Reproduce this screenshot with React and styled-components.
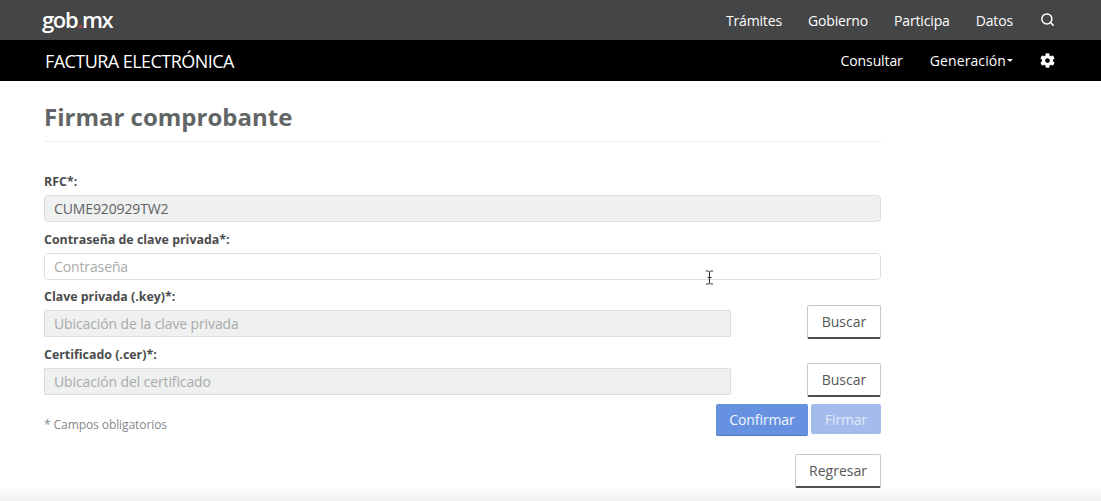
import React from "react"
import styled, { createGlobalStyle } from "styled-components"
import { FaCog } from "react-icons/fa"
import { Search } from "lucide-react"

const GlobalStyle = createGlobalStyle`
  html, body {
    margin: 0;
    padding: 0;
    background: #fff;
    font-family: "Open Sans", "Liberation Sans", sans-serif;
    overflow: hidden;
  }
`

export default function App() {
  return (
    <Page>
      <GlobalStyle />
      <TopBar>
        <Logo>
          gob<LogoDot>.</LogoDot>mx
        </Logo>
        <TopLinks>
          <TopLink>Trámites</TopLink>
          <TopLink>Gobierno</TopLink>
          <TopLink>Participa</TopLink>
          <TopLink>Datos</TopLink>
          <SearchIcon>
            <Search size={15} strokeWidth={2.4} color="#fff" />
          </SearchIcon>
        </TopLinks>
      </TopBar>
      <SubBar>
        <Brand>FACTURA ELECTRÓNICA</Brand>
        <SubLinks>
          <SubLink>Consultar</SubLink>
          <SubLink $spacing={0.1}>
            Generación
            <Caret />
          </SubLink>
          <FaCog color="white" size="15px" />
        </SubLinks>
      </SubBar>
      <Main>
        <Title>Firmar comprobante</Title>
        <Label $top={30}>RFC*:</Label>
        <Input $filled>CUME920929TW2</Input>
        <Label>Contraseña de clave privada*:</Label>
        <Input $placeholder>Contraseña</Input>
        <FileRow>
          <FileField>
            <Label $top={7}>Clave privada (.key)*:</Label>
            <Input $disabled>Ubicación de la clave privada</Input>
          </FileField>
          <OutlineButton>Buscar</OutlineButton>
        </FileRow>
        <FileRow>
          <FileField>
            <Label>Certificado (.cer)*:</Label>
            <Input $disabled>Ubicación del certificado</Input>
          </FileField>
          <OutlineButton>Buscar</OutlineButton>
        </FileRow>
        <ActionRow>
          <Note>* Campos obligatorios</Note>
          <Actions>
            <PrimaryButton>Confirmar</PrimaryButton>
            <PrimaryButton $off>Firmar</PrimaryButton>
          </Actions>
        </ActionRow>
        <BackRow>
          <OutlineButton $wide>Regresar</OutlineButton>
        </BackRow>
      </Main>
      <Cursor width="9" height="15" viewBox="0 0 9 15">
        <path d="M1 1h2.5L4.5 2 5.5 1H8M4.5 2v11M1 14h2.500L4.500 13l1 1H8M2.500 7.500h4" fill="none" stroke="#333" strokeWidth="1" />
      </Cursor>
      <BottomFade />
    </Page>
  )
}

const Page = styled.div`
  position: relative;
  width: 1101px;
  height: 501px;
  overflow: hidden;
  background: #fff;
`
const TopBar = styled.div`
  height: 40px;
  background: #444546;
  display: flex;
  align-items: center;
  justify-content: space-between;
  padding: 0 46px 0 42px;
`
const Logo = styled.div`
  color: #fff;
  font-size: 22px;
  font-weight: 600;
  letter-spacing: -1.35px;
  margin-top: -2px;
`
const LogoDot = styled.span`
  color: #b0474a;
`
const TopLinks = styled.div`
  display: flex;
  align-items: center;
  gap: 26px;
`
const TopLink = styled.span`
  color: #fff;
  font-size: 14px;
  letter-spacing: -0.15px;
`
const SearchIcon = styled.span`
  display: flex;
  margin: -1px 0 0 1px;
`
const SubBar = styled.div`
  height: 41px;
  background: #000;
  display: flex;
  align-items: center;
  justify-content: space-between;
  padding: 0 46px 0 45px;
`
const Brand = styled.div`
  color: #fff;
  font-size: 18px;
  letter-spacing: -0.55px;
`
const SubLinks = styled.div`
  display: flex;
  align-items: center;
  gap: 27px;
`
const SubLink = styled.span`
  color: #fff;
  font-size: 14px;
  letter-spacing: ${(p) => p.$spacing ?? -0.1}px;
  display: flex;
  align-items: center;
`
const Caret = styled.span`
  width: 0;
  height: 0;
  margin-left: 1px;
  border-top: 3px solid #fff;
  border-left: 3px solid transparent;
  border-right: 3px solid transparent;
`
const Main = styled.div`
  width: 837px;
  margin-left: 44px;
`
const Title = styled.h1`
  margin: 0;
  height: 61px;
  padding-top: 18px;
  box-sizing: border-box;
  border-bottom: 1px solid #eeeeee;
  color: #626566;
  font-size: 24px;
  line-height: 36px;
  font-weight: 700;
`
const Label = styled.div`
  margin-top: ${(p) => p.$top || 8}px;
  margin-bottom: 6px;
  height: 17px;
  color: #4a4c4d;
  font-size: 12.4px;
  line-height: 20px;
  font-weight: 700;
`
const Input = styled.div`
  box-sizing: border-box;
  height: 27px;
  padding: 0 9px;
  border: 1px solid #dcdedd;
  border-radius: ${(p) => (p.$disabled ? "1px" : "4px")};
  background: ${(p) => (p.$filled || p.$disabled ? "#eff0f0" : "#fff")};
  color: ${(p) => (p.$filled ? "#606263" : "#a9abab")};
  font-size: 14px;
  line-height: 25px;
  letter-spacing: -0.12px;
`
const FileRow = styled.div`
  display: flex;
  justify-content: space-between;
  align-items: flex-end;
`
const FileField = styled.div`
  width: 687px;
`
const OutlineButton = styled.button`
  box-sizing: border-box;
  width: ${(p) => (p.$wide ? "86px" : "74px")};
  height: 34px;
  margin-bottom: -2px;
  padding: 0;
  background: #fff;
  border: 1px solid #c9c9c9;
  border-bottom: 2px solid #4c4c4c;
  border-radius: 2px;
  color: #555758;
  font-family: inherit;
  font-size: 14px;
`
const ActionRow = styled.div`
  display: flex;
  justify-content: space-between;
  align-items: center;
  margin-top: 9px;
`
const Note = styled.span`
  color: #85878a;
  font-size: 12px;
  letter-spacing: -0.08px;
  margin-top: 8px;
`
const Actions = styled.div`
  display: flex;
  align-items: flex-start;
  gap: 3px;
`
const PrimaryButton = styled.button`
  box-sizing: border-box;
  height: ${(p) => (p.$off ? "30px" : "32px")};
  width: ${(p) => (p.$off ? "70px" : "92px")};
  padding: 0;
  background: ${(p) => (p.$off ? "#a3bcec" : "#6691e0")};
  border: 0;
  border-bottom: ${(p) => (p.$off ? "0" : "1px solid #5378bd")};
  border-radius: 2px;
  color: ${(p) => (p.$off ? "#dfe8f8" : "#f2f5fc")};
  font-family: inherit;
  font-size: 14px;
  letter-spacing: -0.1px;
`
const BackRow = styled.div`
  display: flex;
  justify-content: flex-end;
  margin-top: 18px;
`
const Cursor = styled.svg`
  position: absolute;
  left: 705px;
  top: 270px;
`
const BottomFade = styled.div`
  position: absolute;
  left: 0;
  right: 0;
  bottom: 0;
  height: 14px;
  background: linear-gradient(to bottom, rgba(240, 240, 240, 0), #f1f1f1);
  pointer-events: none;
`
